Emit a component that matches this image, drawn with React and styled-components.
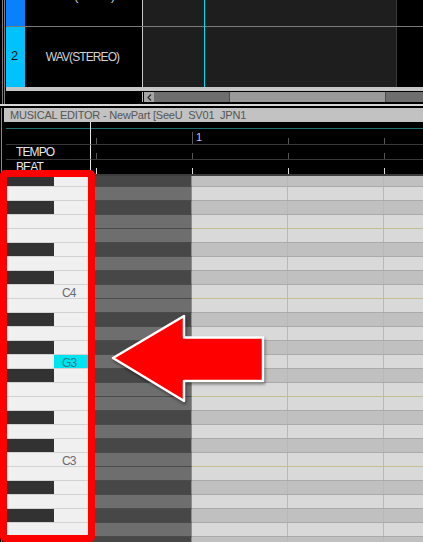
import React from 'react';
import styled, { createGlobalStyle } from 'styled-components';

const GlobalStyle = createGlobalStyle`
  html, body { margin: 0; padding: 0; background: #000; }
  body { font-family: "Liberation Sans", Arial, sans-serif; }
  * { box-sizing: border-box; }
`;

const NOTES = [
  'G#4', 'G4', 'F#4', 'F4', 'E4', 'D#4', 'D4', 'C#4', 'C4',
  'B3', 'A#3', 'A3', 'G#3', 'G3', 'F#3', 'F3', 'E3', 'D#3', 'D3', 'C#3', 'C3',
  'B2', 'A#2', 'A2', 'G#2', 'G2', 'F#2',
];
const LABELS = { C4: 'C4', G3: 'G3', C3: 'C3' };
const SELECTED = 'G3';

const Screen = styled.div`
  position: relative;
  width: 423px;
  height: 542px;
  overflow: hidden;
  background: #000;
  display: flex;
  flex-direction: column;
`;

const Frame = styled.div`
  width: ${p => p.$w}px;
  flex-shrink: 0;
  background: ${p => p.$bg};
`;

/* ---------- track window ---------- */

const TrackWindow = styled.div`
  display: flex;
  height: 104px;
  flex-shrink: 0;
`;

const TrackPane = styled.div`
  flex: 1;
  display: flex;
  flex-direction: column;
`;

const TrackViewport = styled.div`
  position: relative;
  height: 87px;
  overflow: hidden;
`;

const TrackScroll = styled.div`
  margin-top: -34px;
`;

const TrackRow = styled.div`
  display: flex;
  height: 61px;
  border-bottom: 1px solid #7a7a7a;
`;

const Swatch = styled.div`
  width: 19px;
  background: ${p => p.$color};
  display: flex;
  align-items: center;
  justify-content: center;
  font-size: 13px;
  color: #101010;
  padding-right: 2px;
  padding-bottom: 3px;
`;

const TrackName = styled.div`
  width: 117px;
  display: flex;
  align-items: center;
  justify-content: center;
  font-size: 12px;
  letter-spacing: -0.9px;
  color: #d2d2d2;
  padding-right: 2px;
`;

const Timeline = styled.div`
  width: 254px;
  background: #1e1e1e;
  border-left: 1px solid #c8c8c8;
`;

const TrackEnd = styled.div`
  flex: 1;
  border-left: 1px solid #3a3a3a;
`;

const Playhead = styled.div`
  position: absolute;
  left: 198px;
  top: 0;
  bottom: 0;
  width: 1px;
  background: #00dcec;
`;

const Strip = styled.div`
  height: 4px;
  background: #c6c6c6;
`;

const ScrollRow = styled.div`
  display: flex;
  height: 10px;
  margin-top: 1px;
`;

const ScrollSpacer = styled.div`
  width: 137px;
  border-right: 1px solid #c0c0c0;
  margin-right: 1px;
`;

const ScrollButton = styled.div`
  width: 10px;
  background: #a6a6a6;
  display: flex;
  align-items: center;
  justify-content: center;
`;

const ScrollTrack = styled.div`
  flex: 1;
  display: flex;
  background: #6e6e6e;
`;

const Thumb = styled.div`
  margin-left: ${p => p.$left}px;
  width: ${p => p.$width}px;
  background: #9a9a9a;
  border-left: 1px solid #4c4c4c;
  border-right: 1px solid #4c4c4c;
  display: flex;
`;

const ThumbMark = styled.div`
  margin-left: 7px;
  width: 1px;
  background: #00dcec;
`;

const Divider = styled.div`
  height: 4px;
  flex-shrink: 0;
  border-top: 2px solid #d6d6d6;
`;

/* ---------- editor ---------- */

const Editor = styled.div`
  flex: 1;
  display: flex;
  min-height: 0;
`;

const EditorMain = styled.div`
  flex: 1;
  display: flex;
  flex-direction: column;
  min-height: 0;
`;

const TitleBar = styled.div`
  height: 14px;
  flex-shrink: 0;
  background: #c2c2c2;
  padding-left: 6px;
  font-size: 11px;
  line-height: 14px;
  letter-spacing: -0.2px;
  color: #555;
  white-space: pre;
`;

const Header = styled.div`
  margin-left: 2px;
  flex-shrink: 0;
  display: flex;
  flex-direction: column;
`;

const HeadRow = styled.div`
  display: flex;
  height: ${p => p.$h}px;
  background: ${p => p.$bg || 'transparent'};
`;

const HeadLabel = styled.div`
  width: 85px;
  border-right: 1px solid #e4e4e4;
  border-bottom: ${p => (p.$line ? '1px solid #383838' : 'none')};
  padding-left: 10px;
  padding-top: 1px;
  font-size: 12px;
  letter-spacing: -0.9px;
  line-height: 13px;
  color: #e8e8e8;
`;

const HeadTime = styled.div`
  position: relative;
  flex: 1;
  border-bottom: ${p => (p.$line ? '1px solid #383838' : 'none')};
  background-image: ${p =>
    p.$tick
      ? `linear-gradient(90deg, transparent 5px, ${p.$tick} 5px, ${p.$tick} 6px, transparent 6px)`
      : 'none'};
  background-size: 96px 6px;
  background-position: 0 100%;
  background-repeat: repeat-x;
`;

const BarTick = styled.div`
  position: absolute;
  left: 101px;
  bottom: 0;
  width: 1px;
  height: 12px;
  background: #5a5a5a;
`;

const BarNumber = styled.span`
  position: absolute;
  left: 105px;
  top: 2px;
  font-size: 11px;
  color: #d8b8e8;
`;

const HeadStrip = styled.div`
  height: 2px;
  background: #3c3c3c;
`;

const Roll = styled.div`
  flex: 1;
  margin-left: 2px;
  overflow: hidden;
`;

const RollRows = styled.div`
  margin-top: -4px;
`;

const NoteRow = styled.div`
  display: flex;
  height: 14px;
`;

const KeyCell = styled.div`
  width: 84px;
  display: flex;
  background: #f0f0f0;
  border-top: 1px solid #d2d2d2;
`;

const BlackKey = styled.div`
  width: 48px;
  background: #323232;
`;

const KeyLabel = styled.div`
  flex: 1;
  margin-left: ${p => (p.$black ? 0 : 48)}px;
  margin-right: 2px;
  background: ${p => (p.$selected ? '#00e4f0' : 'transparent')};
  color: ${p => (p.$selected ? '#1b7f8e' : '#646a78')};
  font-size: 12px;
  letter-spacing: -0.9px;
  line-height: 12px;
  padding-top: 2px;
  padding-left: 8px;
`;

const DarkCell = styled.div`
  width: 102px;
  background: ${p => (p.$black ? '#474747' : '#6e6e6e')};
  border-top: 1px solid #4a4a4a;
  border-right: 1px solid #8e8e8e;
`;

const LightCell = styled.div`
  flex: 1;
  background-color: ${p => (p.$black ? '#c0c0c0' : '#d9d9d9')};
  border-top: 1px solid ${p => (p.$octave ? '#c6be96' : '#aaaaaa')};
  background-image: linear-gradient(90deg, transparent 95px, #c2ba92 95px, #c2ba92 96px, transparent 96px);
  background-size: 96px 100%;
`;

/* ---------- annotations ---------- */

const Highlight = styled.div`
  position: absolute;
  left: 0;
  top: 170px;
  width: 95px;
  height: 372px;
  border: 7px solid #ff0000;
  border-radius: 5px;
`;

const ArrowSvg = styled.svg`
  position: absolute;
  left: 105px;
  top: 308px;
  overflow: visible;
  filter: drop-shadow(1px 2px 1.5px rgba(0, 0, 0, 0.45));
`;

const TRACK_FRAME = 'linear-gradient(90deg, #000 0 2px, #7c7c7c 2px 3px, #000 3px 4px, #7c7c7c 4px 5px, #000 5px)';
const EDITOR_FRAME = 'linear-gradient(90deg, #000 0 1px, #8a8a8a 1px 2px, #000 2px)';

function Track({ num, name, color }) {
  return (
    <TrackRow>
      <Swatch $color={color}>{num}</Swatch>
      <TrackName>{name}</TrackName>
      <Timeline />
      <TrackEnd />
    </TrackRow>
  );
}

function Note({ note }) {
  const black = note.includes('#');
  const octave = note[0] === 'E' || note[0] === 'B';
  const label = LABELS[note];
  return (
    <NoteRow>
      <KeyCell>
        {black && <BlackKey />}
        <KeyLabel $black={black} $selected={note === SELECTED}>{label}</KeyLabel>
      </KeyCell>
      <DarkCell $black={black} />
      <LightCell $black={black} $octave={octave} />
    </NoteRow>
  );
}

export default function App() {
  return (
    <Screen>
      <GlobalStyle />
      <TrackWindow>
        <Frame $w={6} $bg={TRACK_FRAME} />
        <TrackPane>
          <TrackViewport>
            <TrackScroll>
              <Track num="1" name="WAV(MONO)" color="#0a80ff" />
              <Track num="2" name="WAV(STEREO)" color="#00c2ff" />
            </TrackScroll>
            <Playhead />
          </TrackViewport>
          <Strip />
          <ScrollRow>
            <ScrollSpacer />
            <ScrollButton>
              <svg width="5" height="7" viewBox="0 0 5 7">
                <polyline points="4,0.5 1,3.5 4,6.5" fill="none" stroke="#2a2a2a" strokeWidth="1.2" />
              </svg>
            </ScrollButton>
            <ScrollTrack>
              <Thumb $left={75} $width={157}>
                <ThumbMark />
              </Thumb>
            </ScrollTrack>
          </ScrollRow>
        </TrackPane>
      </TrackWindow>
      <Divider />
      <Editor>
        <Frame $w={4} $bg={EDITOR_FRAME} />
        <EditorMain>
          <TitleBar>{'MUSICAL EDITOR - NewPart [SeeU  SV01  JPN1'}</TitleBar>
          <Header>
            <HeadRow $h={6}>
              <HeadLabel />
              <HeadTime />
            </HeadRow>
            <HeadRow $h={1} $bg="#1f6f70">
              <HeadLabel />
              <HeadTime />
            </HeadRow>
            <HeadRow $h={16}>
              <HeadLabel $line />
              <HeadTime $line $tick="#555">
                <BarTick />
                <BarNumber>1</BarNumber>
              </HeadTime>
            </HeadRow>
            <HeadRow $h={15}>
              <HeadLabel $line>TEMPO</HeadLabel>
              <HeadTime $line $tick="#555" />
            </HeadRow>
            <HeadRow $h={14}>
              <HeadLabel>BEAT</HeadLabel>
              <HeadTime $tick="#dcdcdc" />
            </HeadRow>
            <HeadStrip />
          </Header>
          <Roll>
            <RollRows>
              {NOTES.map(n => <Note key={n} note={n} />)}
            </RollRows>
          </Roll>
        </EditorMain>
      </Editor>

      <Highlight />
      <ArrowSvg width="170" height="104" viewBox="0 0 170 104">
        <polygon
          points="8,50 79,8 79,29.5 158,29.5 158,73 79,73 79,93"
          fill="#ff0000"
          stroke="#ffffff"
          strokeWidth="2.5"
          strokeLinejoin="round"
        />
      </ArrowSvg>
    </Screen>
  );
}
